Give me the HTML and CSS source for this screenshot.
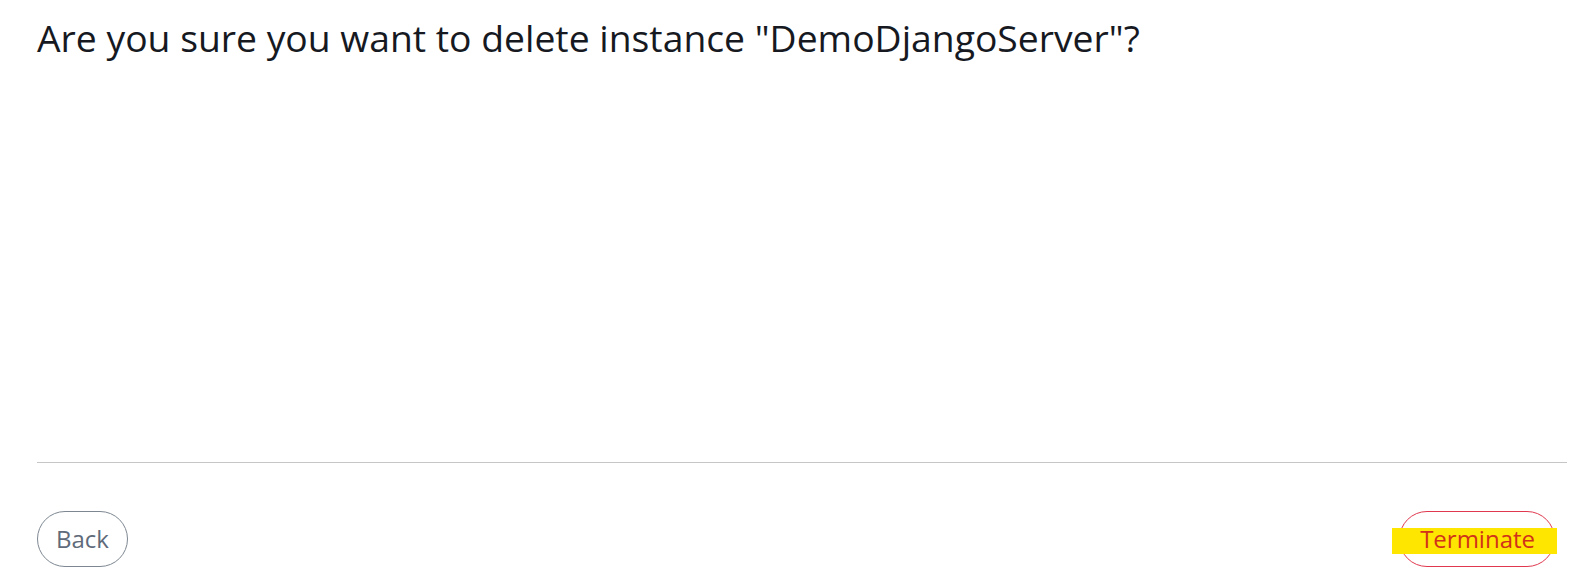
FILE: index.html
```html
<!DOCTYPE html>
<html lang="en">
<head>
<meta charset="utf-8">
<title>Delete instance</title>
<link rel="stylesheet" href="styles.css">
</head>
<body>
<div class="dialog">
  <h1 class="title">Are you sure you want to delete instance "DemoDjangoServer"?</h1>
  <div class="content"></div>
  <hr class="divider">
  <div class="footer">
    <button class="btn btn-back" type="button">Back</button>
    <button class="btn btn-terminate" type="button"><span class="label">Terminate</span></button>
  </div>
</div>
</body>
</html>
```
FILE: styles.css
```css
html, body {
  margin: 0;
  padding: 0;
  background: #ffffff;
}
body {
  font-family: "Open Sans", "Noto Sans", sans-serif;
  color: #16191f;
}
.dialog {
  display: flex;
  flex-direction: column;
  padding: 13px 29px 0 37px;
}
.title {
  margin: 0;
  font-size: 37.3px;
  line-height: 50px;
  font-weight: 400;
  color: #16191f;
  white-space: nowrap;
}
.content {
  height: 399px;
}
.divider {
  margin: 0;
  border: 0;
  height: 1px;
  background: #c6c6c6;
}
.footer {
  display: flex;
  justify-content: space-between;
  align-items: center;
  margin-top: 48px;
  padding-right: 12px;
}
.btn {
  position: relative;
  isolation: isolate;
  height: 56px;
  padding: 0 18px;
  border-radius: 28px;
  background: transparent;
  font-family: inherit;
  font-size: 24px;
  line-height: 30px;
  cursor: pointer;
}
.btn-back {
  border: 1px solid #7d8791;
  color: #5f6b7a;
}
.btn-terminate {
  border: 1px solid #e0394f;
  color: #d1321a;
  padding: 0 19px 0 20px;
}
.btn-terminate::before {
  content: "";
  position: absolute;
  z-index: -1;
  left: -8px;
  right: -3px;
  top: 16px;
  height: 26px;
  background: #ffe600;
}
```
